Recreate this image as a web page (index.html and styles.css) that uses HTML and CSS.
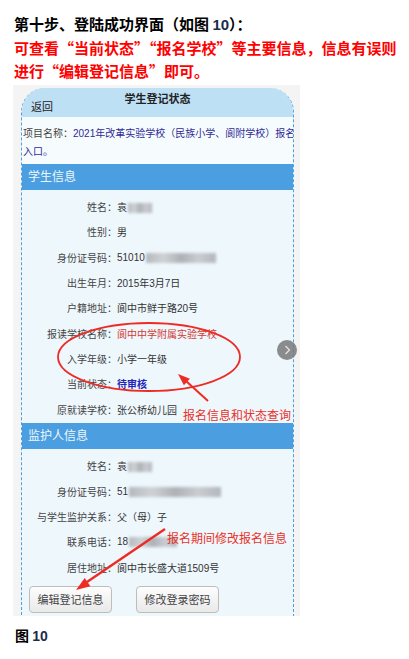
FILE: index.html
```html
<html>
	<head>
		<link rel="stylesheet" href="styles.css">
	</head>
	<body>
		<div class="intro">
			<p>第十步、登陆成功界面（如图 <span class="num">10</span>）：</p>
			<p class="note">可查看“当前状态”“报名学校”等主要信息，信息有误则<br/>进行“编辑登记信息”即可。</p>
		</div>
		<div class="shot">
			<div class="card">
				<div class="top">
					<span class="title">学生登记状态</span>
					<span class="back">返回</span>
				</div>
				<div class="proj">项目名称：<span class="pname">2021年改革实验学校（民族小学、阆附学校）报名<br/>入口。</span></div>
				<div class="bar">学生信息</div>
				<div class="info">
					<div class="row"><span class="k">姓名：</span><span>袁<i class="blur name"></i></span></div>
					<div class="row"><span class="k">性别：</span><span>男</span></div>
					<div class="row"><span class="k">身份证号码：</span><span>51010<i class="blur sid"></i></span></div>
					<div class="row"><span class="k">出生年月：</span><span>2015年3月7日</span></div>
					<div class="row"><span class="k">户籍地址：</span><span>阆中市鲜于路20号</span></div>
					<div class="row"><span class="k">报读学校名称：</span><span class="school">阆中中学附属实验学校</span></div>
					<div class="row"><span class="k">入学年级：</span><span>小学一年级</span></div>
					<div class="row"><span class="k">当前状态：</span><span class="state">待审核</span></div>
					<div class="row"><span class="k">原就读学校：</span><span>张公桥幼儿园</span></div>
				</div>
				<div class="bar">监护人信息</div>
				<div class="info">
					<div class="row"><span class="k">姓名：</span><span>袁<i class="blur name"></i></span></div>
					<div class="row"><span class="k">身份证号码：</span><span>51<i class="blur gid"></i></span></div>
					<div class="row"><span class="k">与学生监护关系：</span><span>父（母）子</span></div>
					<div class="row"><span class="k">联系电话：</span><span>18<i class="blur tel"></i></span></div>
					<div class="row"><span class="k">居住地址：</span><span>阆中市长盛大道1509号</span></div>
				</div>
				<div class="actions">
					<button>编辑登记信息</button>
					<button>修改登录密码</button>
				</div>
			</div>
			<div class="pager">
				<svg width="20" height="20" viewBox="0 0 20 20"><path d="M8.5 6 L12.5 10 L8.5 14" fill="none" stroke="#e6e6e6" stroke-width="1.2"/></svg>
			</div>
			<svg class="marks" width="287" height="531" viewBox="0 0 287 531">
				<ellipse cx="136" cy="272" rx="91" ry="34" fill="none" stroke="#ee2a24" stroke-width="1.8"/>
				<line x1="195" y1="316" x2="173" y2="296" stroke="#ee2a24" stroke-width="2"/>
				<polygon points="165,289 176.9,293.7 170.9,300.3" fill="#ee2a24"/>
				<line x1="152" y1="444" x2="74" y2="497" stroke="#ee2a24" stroke-width="2.4"/>
				<polygon points="63,505 77.4,501.2 71.7,493" fill="#ee2a24"/>
			</svg>
			<span class="tip one">报名信息和状态查询</span>
			<span class="tip two">报名期间修改报名信息</span>
		</div>
		<p class="caption">图 <span class="num">10</span></p>
	</body>
</html>
```

FILE: styles.css
```css
body {
	margin: 0;
	width: 409px;
	background: #fff;
	font-family: "Noto Sans CJK SC", sans-serif;
}
.intro {
	padding: 11.5px 0 0 14px;
	font-size: 15px;
	font-weight: 700;
	line-height: 23px;
	color: #000;
	white-space: nowrap;
}
.intro p { margin: 0 }
.note { color: #ff0000 }
.num {
	font-family: "Liberation Sans", sans-serif;
	color: #1c2b4b;
}
.shot {
	position: relative;
	margin: 3.5px 0 0 13px;
	width: 287px;
	height: 531px;
	background: #f4f4f4;
	overflow: hidden;
	font-family: "Liberation Sans", "Noto Sans CJK SC", sans-serif;
	font-size: 10px;
	color: #333;
}
.card {
	margin: 3px 0 0 8px;
	width: 271px;
	border-left: 1px dashed #4f9fdc;
	border-right: 1px dashed #4f9fdc;
	border-radius: 24px 24px 0 0;
	background: #eef7fc;
	overflow: hidden;
}
.top {
	display: grid;
	height: 29px;
	background: #bee0f5;
	color: #222;
}
.top span {
	grid-area: 1 / 1;
	line-height: 14px;
	font-size: 11px;
}
.title {
	align-self: start;
	justify-self: center;
	margin-top: 4px;
	font-weight: 700;
}
.back {
	align-self: end;
	justify-self: start;
	margin: 0 0 3px 9px;
}
.proj {
	padding: 8px 6px 3px 1px;
	line-height: 18px;
	background: #f6fbfe;
	color: #444;
	white-space: nowrap;
}
.pname { color: #302c94 }
.bar {
	height: 26px;
	line-height: 26px;
	padding-left: 6px;
	background: #4b9fe1;
	color: #eef6fd;
	font-size: 12px;
}
.info { padding: 4px 0 1.5px }
.row {
	display: grid;
	grid-template-columns: 95px 1fr;
	align-items: center;
	height: 25.3px;
	white-space: nowrap;
}
.k {
	text-align: right;
	color: #444;
}
.school { color: #d23a33 }
.state {
	color: #2424b8;
	font-weight: 700;
}
.blur {
	display: inline-block;
	height: 10px;
	margin-left: 1px;
	vertical-align: -2px;
	background: linear-gradient(90deg, #b4b8bd, #cfd2d5 25%, #adb1b6 50%, #c9ccd0 75%, #b3b7bc);
	filter: blur(1.8px);
}
.blur.name { width: 24px }
.blur.sid { width: 70px }
.blur.gid { width: 92px }
.blur.tel { width: 48px }
.actions {
	display: flex;
	gap: 24px;
	padding: 4.5px 0 10px 7px;
}
button {
	width: 83px;
	height: 27px;
	border: 1px solid #bdbdbd;
	border-radius: 4px;
	background: linear-gradient(#fdfdfd, #e9e9e9);
	font-family: "Noto Sans CJK SC", sans-serif;
	font-size: 11px;
	color: #444;
	padding: 0;
}
.pager {
	position: absolute;
	left: 264px;
	top: 255px;
	width: 20px;
	height: 20px;
	border-radius: 50%;
	background: rgba(120, 120, 120, .85);
}
.pager svg { display: block }
.marks {
	position: absolute;
	left: 0;
	top: 0;
}
.tip {
	position: absolute;
	font-family: "Noto Sans CJK SC", sans-serif;
	font-size: 12px;
	line-height: 16px;
	color: #ea3128;
	white-space: nowrap;
}
.tip.one { left: 170px; top: 322px }
.tip.two { left: 154px; top: 445px }
.caption {
	margin: 7.5px 0 0 15px;
	font-size: 14px;
	font-weight: 700;
	line-height: 23px;
}
```
